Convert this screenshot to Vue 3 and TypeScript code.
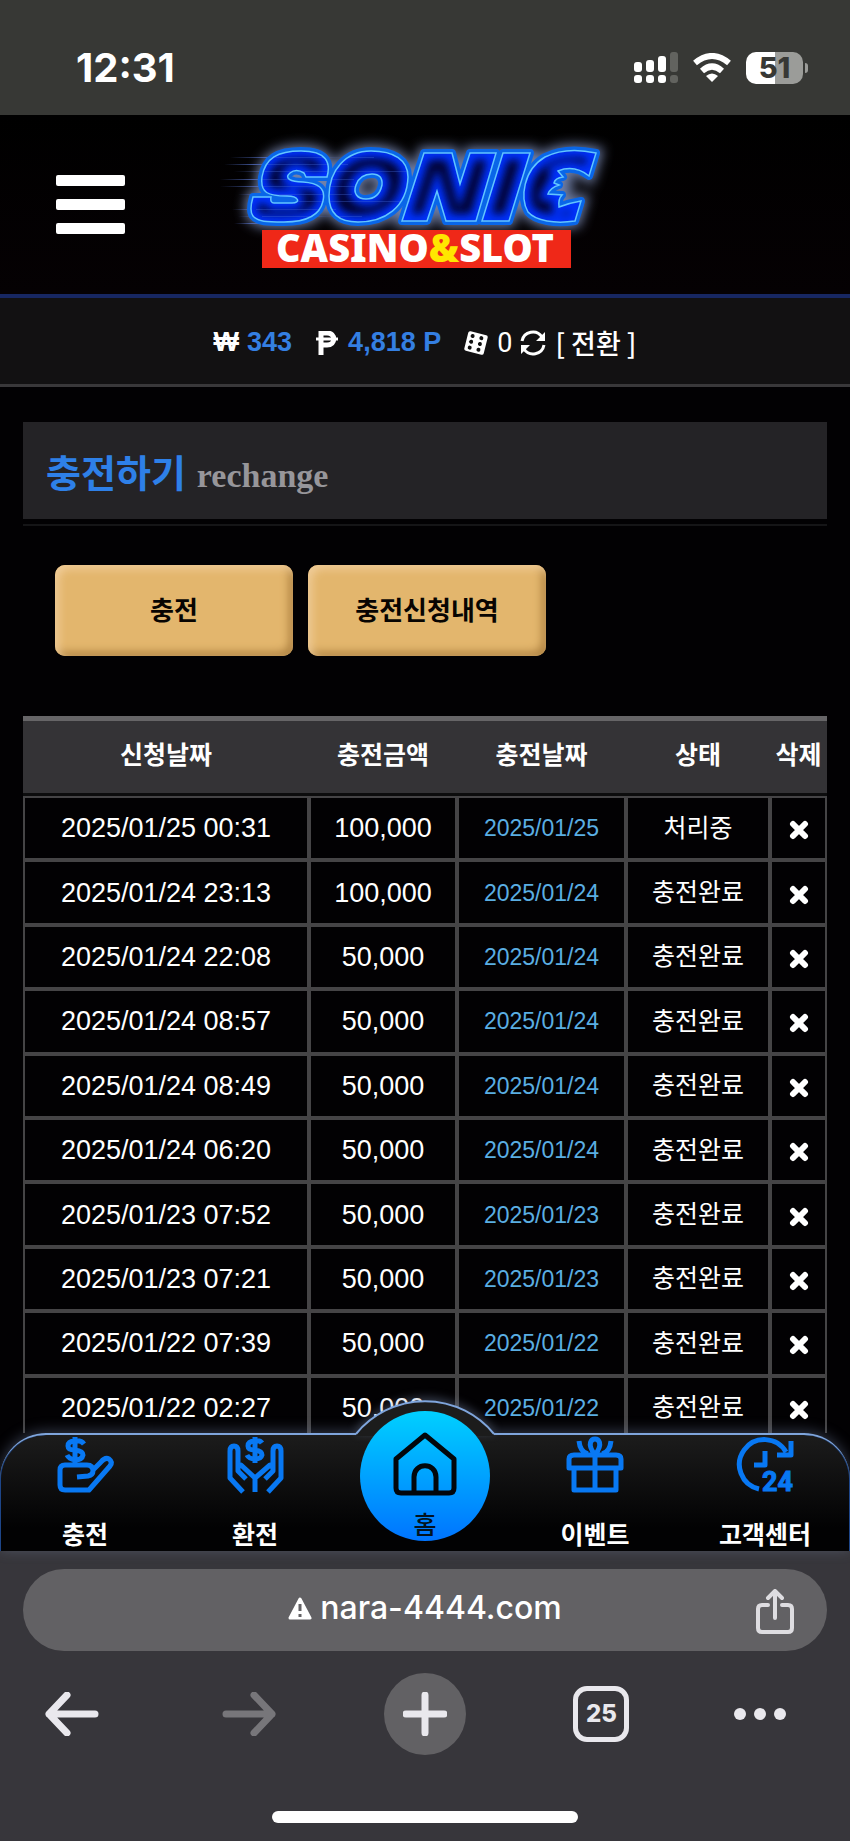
<script setup lang="ts">
interface Charge {
  requested: string
  amount: string
  charged: string
  status: string
}

const rows: Charge[] = [
  { requested: '2025/01/25 00:31', amount: '100,000', charged: '2025/01/25', status: '처리중' },
  { requested: '2025/01/24 23:13', amount: '100,000', charged: '2025/01/24', status: '충전완료' },
  { requested: '2025/01/24 22:08', amount: '50,000', charged: '2025/01/24', status: '충전완료' },
  { requested: '2025/01/24 08:57', amount: '50,000', charged: '2025/01/24', status: '충전완료' },
  { requested: '2025/01/24 08:49', amount: '50,000', charged: '2025/01/24', status: '충전완료' },
  { requested: '2025/01/24 06:20', amount: '50,000', charged: '2025/01/24', status: '충전완료' },
  { requested: '2025/01/23 07:52', amount: '50,000', charged: '2025/01/23', status: '충전완료' },
  { requested: '2025/01/23 07:21', amount: '50,000', charged: '2025/01/23', status: '충전완료' },
  { requested: '2025/01/22 07:39', amount: '50,000', charged: '2025/01/22', status: '충전완료' },
  { requested: '2025/01/22 02:27', amount: '50,000', charged: '2025/01/22', status: '충전완료' },
]

const headings: string[] = ['신청날짜', '충전금액', '충전날짜', '상태', '삭제']
const streaks: number[][] = [
  [34, 32, 120], [28, 39, 100], [38, 46, 150], [24, 54, 110],
  [24, 61, 130], [42, 69, 90], [60, 76, 130], [36, 84, 80], [42, 91, 100], [38, 98, 60],
]
</script>

<template>
  <div class="screen">
    <div class="status">
      <span class="clock">12:31</span>
      <div class="indicators">
        <svg width="44" height="32" viewBox="0 0 44 32" aria-label="신호">
          <g fill="#fff">
            <rect x="0" y="10" width="8" height="10" rx="3" />
            <rect x="12" y="8" width="8" height="12" rx="3" />
            <rect x="24" y="4" width="8" height="16" rx="3" />
            <rect x="0" y="23" width="8" height="8" rx="3" />
            <rect x="12" y="23" width="8" height="8" rx="3" />
            <rect x="24" y="23" width="8" height="8" rx="3" />
          </g>
          <g fill="#62635f">
            <rect x="36" y="0" width="8" height="20" rx="3" />
            <rect x="36" y="23" width="8" height="8" rx="3" />
          </g>
        </svg>
        <svg width="38" height="30" viewBox="0 0 38 30" aria-label="와이파이">
          <path d="M2 10Q19-4 36 10M9 18Q19 9 29 18" fill="none" stroke="#fff" stroke-width="6" />
          <path d="M13 23Q19 18 25 23L19 29Z" fill="#fff" />
        </svg>
        <div class="battery"><span>51</span></div>
      </div>
    </div>

    <header class="header">
      <button class="menu" aria-label="메뉴"><i></i><i></i><i></i></button>
      <svg class="logo" viewBox="0 0 430 160" role="img" aria-label="SONIC CASINO&amp;SLOT">
        <defs>
          <filter id="glow" x="-20%" y="-30%" width="140%" height="160%"><feGaussianBlur stdDeviation="6" /></filter>
          <filter id="inner" x="-20%" y="-20%" width="140%" height="140%"><feGaussianBlur stdDeviation="4" /></filter>
          <linearGradient id="fade"><stop offset="0" stop-color="#5a78d8" stop-opacity="0" /><stop offset=".3" stop-color="#5a78d8" stop-opacity=".7" /><stop offset="1" stop-color="#5a78d8" stop-opacity="0" /></linearGradient>
          <g id="word">
            <path d="M127 52C131 38 127 26 101 26C78 26 65 33 62 52C60 68 68 71 87 71C99 71 101 78 92 78H74Q70 78 71 72H53Q49 86 53 91C58 97 67 97 84 97C107 97 120 90 123 76C126 63 118 58 103 57C90 57 84 53 90 48Q96 43 104 48L106 52Z" />
            <path fill-rule="evenodd" d="M171 26C146 26 129 45 129 71C129 88 139 97 158 97C184 97 207 83 208 52C208 35 194 26 171 26ZM172 49Q183 49 182 60Q179 74 166 74C157 74 153 68 156 60Q160 49 172 49Z" />
            <path d="M224 28H252L260 59L270 28H296L276 96H246L237 66L227 96H202Z" />
            <path d="M303 28H330L309 96H282Z" />
            <path d="M396 28L389 51C379 43 368 42 358 46L363 52Q355 53 354 58L359 60Q350 63 348 69L362 70Q358 74 359 82Q369 78 381 76L375 96C355 99 336 96 328 87C320 73 323 45 345 32C359 25 378 24 396 28Z" />
          </g>
          <mask id="wordMask" maskUnits="userSpaceOnUse" x="0" y="0" width="430" height="160"><use href="#word" fill="#fff" /></mask>
        </defs>
        <use href="#word" fill="#7180a8" stroke="#7180a8" stroke-width="12" filter="url(#glow)" />
        <rect v-for="s in streaks" :key="s[1]" :x="s[0]! - 4" :y="s[1]" :width="s[2]" height="1" fill="url(#fade)" />
        <use href="#word" fill="#0048ce" stroke="#0966e8" stroke-width="8" stroke-linejoin="round" />
        <use href="#word" fill="#02022c" />
        <g mask="url(#wordMask)">
          <use href="#word" fill="none" stroke="#0432ff" stroke-width="14" filter="url(#inner)" />
          <rect v-for="s in streaks" :key="s[1]" :x="s[0]! + 20" :y="s[1]" :width="s[2]" height="1" fill="#416bd8" opacity=".35" />
        </g>
        <use href="#word" fill="none" stroke="#62c5ff" stroke-width="1.5" />
        <rect x="62" y="105" width="309" height="38" fill="#ef2818" />
        <text x="215" y="137" text-anchor="middle" class="tagline">CASINO<tspan fill="#ffe600">&amp;</tspan>SLOT</text>
      </svg>
    </header>

    <div class="balance">
      <span class="coin">₩</span>
      <b class="won">343</b>
      <svg class="peso" width="22" height="24" viewBox="0 0 22 24" aria-label="포인트"><path d="M5 24V2H11C20 2 20 14 11 14H5" fill="none" stroke="#fff" stroke-width="5" /><path d="M0 8H22" stroke="#fff" stroke-width="3" /></svg>
      <b class="points">4,818 P</b>
      <svg class="dice" width="24" height="24" viewBox="0 0 24 24" aria-label="카지노">
        <g transform="rotate(14 12 12)">
          <rect x="2" y="2" width="20" height="20" rx="2" fill="#fff" />
          <g fill="#111"><circle cx="7" cy="6" r="2" /><circle cx="7" cy="12" r="2" /><circle cx="7" cy="18" r="2" /><circle cx="16" cy="6" r="2" /><circle cx="16" cy="12" r="2" /><circle cx="16" cy="18" r="2" /></g>
        </g>
      </svg>
      <span class="zero">0</span>
      <button class="convert">
        <svg width="26" height="26" viewBox="0 0 26 26" aria-hidden="true"><path d="M2 11A11 11 0 0 1 22 7M24 15A11 11 0 0 1 4 19" fill="none" stroke="#fff" stroke-width="3" /><path d="M25 2V11H16ZM1 24V15H10Z" fill="#fff" /></svg>
        <span>[ 전환 ]</span>
      </button>
    </div>

    <main class="content">
      <h1 class="title"><span>충전하기</span><small>rechange</small></h1>
      <div class="rule"></div>
      <div class="tabs">
        <button>충전</button>
        <button>충전신청내역</button>
      </div>
      <table>
        <colgroup><col class="c1" /><col class="c2" /><col class="c3" /><col class="c4" /><col class="c5" /></colgroup>
        <thead><tr><th v-for="h in headings" :key="h" scope="col">{{ h }}</th></tr></thead>
        <tbody>
          <tr v-for="r in rows" :key="r.requested">
            <td>{{ r.requested }}</td>
            <td>{{ r.amount }}</td>
            <td class="date">{{ r.charged }}</td>
            <td class="state">{{ r.status }}</td>
            <td>
              <button class="remove" aria-label="삭제"><svg width="20" height="20" viewBox="0 0 20 20"><path d="M4 4L16 16M16 4L4 16" stroke="#fff" stroke-width="6" stroke-linecap="round" /></svg></button>
            </td>
          </tr>
        </tbody>
      </table>
    </main>

    <nav class="nav">
      <svg class="bump" width="138" height="35" viewBox="0 0 138 35" aria-hidden="true">
        <path d="M0 35V33A89 89 0 0 1 138 33V35Z" fill="#1c1c1c" />
        <path d="M0 33A89 89 0 0 1 138 33" fill="none" stroke="#7fa5dc" stroke-width="2" />
      </svg>
      <a href="#charge">
        <svg viewBox="0 0 56 56"><g class="line"><path d="M27 7Q24 3 18 4Q11 4 11 9Q11 13 18 13Q26 14 26 18Q25 23 18 23Q12 22 10 18M18 0V28" /><path d="M20 40L31 39Q36 38 36 34Q36 28 30 28H8Q3 28 3 33V48Q3 53 8 53H32L53 29Q56 25 52 22Q48 20 44 25L35 34" /></g></svg>
        <span>충전</span>
      </a>
      <a href="#exchange">
        <svg viewBox="0 0 56 56"><g class="line"><path d="M35 6Q33 3 28 4Q21 4 21 9Q21 13 28 13Q35 14 35 18Q34 22 28 22Q22 22 20 18M28 0V26" /><path d="M16 55L3 41V14Q3 9 7 9Q11 9 11 14V34L19 42M11 30L14 28L28 41V55M28 41L43 28L45 30M38 42L46 34V14Q46 9 50 9Q54 9 54 14V41L41 55" /></g></svg>
        <span>환전</span>
      </a>
      <a href="#home" class="home">
        <svg viewBox="0 0 64 64"><path d="M3 27L32 3L61 27V56Q61 61 56 61H8Q3 61 3 56ZM21 61V45C21 30 43 30 43 45V61" /></svg>
        <span>홈</span>
      </a>
      <a href="#event">
        <svg viewBox="0 0 56 56"><g class="line"><path d="M2 31V22Q2 18 7 18H49Q54 18 54 22V31ZM7 31V53H49V31M28 18V53M28 18C19 6 25 2 28 2C31 2 37 6 28 18M12 4Q13 15 21 17M44 4Q43 15 35 17" /></g></svg>
        <span>이벤트</span>
      </a>
      <a href="#support">
        <svg viewBox="0 0 56 56"><g class="line"><path d="M22 52A25 25 0 1 1 49 15M54 4V18H40M28 14V28H17" /></g><text x="25" y="54" class="hours">24</text></svg>
        <span>고객센터</span>
      </a>
    </nav>

    <footer class="browser">
      <div class="address">
        <a href="#site">
          <svg width="24" height="23" viewBox="0 0 24 23" aria-hidden="true"><path d="M12 2L22 21H2Z" fill="#fff" stroke="#fff" stroke-width="3" stroke-linejoin="round" /><path d="M12 7V14M12 17V20" stroke="#626164" stroke-width="3" /></svg>
          <span>nara-4444.com</span>
        </a>
        <button class="share" aria-label="공유"><svg width="40" height="46" viewBox="0 0 40 46"><path d="M13 16H7Q3 16 3 20V39Q3 43 7 43H33Q37 43 37 39V20Q37 16 33 16H27M20 29V3M13 9L20 2L27 9" fill="none" stroke="#dedde1" stroke-width="4" stroke-linecap="round" stroke-linejoin="round" /></svg></button>
      </div>
      <div class="tools">
        <button aria-label="뒤로"><svg width="54" height="44" viewBox="0 0 54 44"><path d="M50 22H4M22 3L4 22L22 41" /></svg></button>
        <button aria-label="앞으로" class="dim"><svg width="54" height="44" viewBox="0 0 54 44"><path d="M4 22H50M32 3L50 22L32 41" /></svg></button>
        <button aria-label="새 탭" class="plus"><svg width="44" height="44" viewBox="0 0 44 44"><path d="M22 3V41M3 22H41" /></svg></button>
        <button class="count"><span>25</span></button>
        <button aria-label="더보기" class="more"><svg width="54" height="14" viewBox="0 0 54 14"><g fill="#e9e8ed"><circle cx="7" cy="7" r="6" /><circle cx="27" cy="7" r="6" /><circle cx="47" cy="7" r="6" /></g></svg></button>
      </div>
      <div class="handle"></div>
    </footer>
  </div>
</template>

<style>
body { margin: 0; background: #37363b; }
</style>

<style scoped>
* { box-sizing: border-box; }
.screen {
  display: flex;
  flex-direction: column;
  height: 100vh;
  overflow: hidden;
  background: #020103;
  color: #fff;
  font-family: "Liberation Sans", "Noto Sans CJK KR", sans-serif;
}
button { border: 0; padding: 0; background: none; color: inherit; font: inherit; }
a { color: inherit; text-decoration: none; }
svg { display: block; }

.status {
  flex: none;
  height: 115px;
  padding: 20px 42px 0 76px;
  background: #373835;
  display: flex;
  align-items: center;
  justify-content: space-between;
}
.clock { font: 700 40px/44px Inter, sans-serif; }
.indicators { display: flex; align-items: center; gap: 15px; }
.battery {
  position: relative;
  width: 57px;
  height: 32px;
  margin-right: 5px;
  border-radius: 10px;
  background: linear-gradient(90deg, #fff 51%, #9b9c99 51%);
  color: #373835;
  font: 800 29px/32px Inter, sans-serif;
  text-align: center;
}
.battery::after {
  content: "";
  position: absolute;
  right: -5px;
  top: 11px;
  width: 3px;
  height: 10px;
  border-radius: 0 4px 4px 0;
  background: #9b9c99;
}

.header {
  flex: none;
  height: 183px;
  border-bottom: 4px solid #172762;
  padding: 10px 56px 0;
  display: grid;
  grid-template-columns: 69px 430px 69px;
  justify-content: space-between;
  align-items: start;
  background: linear-gradient(#000, #050103);
}
.menu { display: flex; flex-direction: column; gap: 13px; margin-top: 50px; }
.menu i { height: 11px; border-radius: 2px; background: #fff; }
.logo { width: 430px; height: 160px; margin-left: -10px; }
.tagline { fill: #fff; font: 900 38px "Noto Sans", sans-serif; }

.balance {
  flex: none;
  height: 89px;
  padding-top: 3px;
  border-bottom: 3px solid #39383a;
  background: #121112;
  display: flex;
  align-items: center;
  justify-content: center;
  font-size: 27px;
}
.coin { font-weight: 700; margin-right: 8px; }
.won, .points { color: #347fe2; }
.peso { margin: 0 10px 0 24px; }
.dice { margin: 0 9px 0 23px; }
.zero { font-family: Roboto, sans-serif; }
.convert { display: flex; align-items: center; gap: 9px; margin-left: 8px; font: 500 27px/30px "Noto Sans CJK KR", sans-serif; }

.content { flex: 1; min-height: 0; overflow: hidden; padding: 35px 23px 0; }
.title {
  margin: 0;
  height: 97px;
  padding: 0 23px;
  background: #242326;
  font: 700 38px/97px "Noto Sans CJK KR", sans-serif;
  color: #2e80e8;
}
.title small { margin-left: 11px; font: 700 34px "Liberation Serif", serif; color: #97969a; }
.rule { height: 2px; margin-top: 5px; background: #151517; }
.tabs { display: flex; gap: 15px; margin: 39px 32px 60px; }
.tabs button {
  width: 238px;
  height: 91px;
  padding-bottom: 5px;
  border-radius: 10px;
  background: #e3b66d;
  box-shadow: inset 4px 4px 8px #f0cc98, inset -4px -4px 8px #ae8241;
  color: #080502;
  font: 700 26px "Noto Sans CJK KR", sans-serif;
}

table { width: 100%; height: 724px; table-layout: fixed; border-collapse: separate; border-spacing: 0; }
.c1 { width: 286px; }
.c2 { width: 148px; }
.c3 { width: 169px; }
.c4 { width: 144px; }
.c5 { width: 57px; }
th {
  height: 80px;
  padding: 0 0 8px;
  border-top: 5px solid #666567;
  border-bottom: 3px solid #0c0c0d;
  background: #343336;
  font: 700 25px/36px "Noto Sans CJK KR", sans-serif;
  white-space: nowrap;
}
td { padding: 0; border: 2px solid #454446; font-size: 27px; line-height: 36px; text-align: center; white-space: nowrap; }
.date { color: #5aaee2; font-size: 23px; }
.state { padding-bottom: 5px; font: 400 25px/36px "Noto Sans CJK KR", sans-serif; }
.remove { display: block; margin: 4px auto 0; }

.nav {
  position: relative;
  flex: none;
  height: 118px;
  display: grid;
  grid-template-columns: repeat(5, 1fr);
  border: solid #7fa5dc;
  border-width: 2px 0 0;
  border-radius: 46px 46px 0 0;
  background: linear-gradient(#1c1c1c, #020203 80%);
  box-shadow: 0 -2px 14px #7d8fb066, inset 1px 0 #1d4588, inset -1px 0 #1d4588;
}
.bump { position: absolute; left: 50%; top: -34px; margin-left: -69px; overflow: visible; filter: drop-shadow(0 -3px 5px #7d8fb066); }
.nav a {
  position: relative;
  display: flex;
  flex-direction: column;
  align-items: center;
  justify-content: space-between;
  padding: 2px 0 2px;
  font: 700 25px/32px "Noto Sans CJK KR", sans-serif;
  white-space: nowrap;
}
.nav a svg { width: 56px; height: 56px; overflow: visible; }
.line { fill: none; stroke: #0878f3; stroke-width: 5; stroke-linejoin: round; }
.hours { fill: #0878f3; stroke: #0878f3; font: 700 27px Roboto, sans-serif; }
.nav .home {
  justify-self: center;
  width: 130px;
  height: 130px;
  margin-top: -24px;
  padding: 21px 0 2px;
  border-radius: 50%;
  background: linear-gradient(#00d0ff, #0074ff);
  color: #031320;
  font-weight: 500;
}
.nav .home svg { width: 64px; height: 64px; fill: none; stroke: #02070c; stroke-width: 5; stroke-linejoin: round; }

.browser { flex: none; height: 290px; padding: 18px 23px 0; background: #37363b; }
.address {
  position: relative;
  height: 82px;
  padding-bottom: 4px;
  border-radius: 41px;
  background: #626164;
  display: flex;
  align-items: center;
  justify-content: center;
}
.address a { display: flex; align-items: center; gap: 8px; font: 500 32px/40px Inter, sans-serif; }
.share { position: absolute; right: 32px; top: 20px; }
.tools { display: grid; grid-template-columns: repeat(5, 1fr); height: 82px; margin: 22px -39px 0; align-items: center; justify-items: center; }
.tools path { fill: none; stroke: #e9e8ed; stroke-width: 7; stroke-linecap: round; stroke-linejoin: round; }
.tools .dim path { stroke: #77767a; }
.plus { width: 82px; height: 82px; border-radius: 50%; background: #626164; display: grid; place-items: center; }
.count { width: 56px; height: 56px; border: 5px solid #e9e8ed; border-radius: 14px; color: #e9e8ed; font: 800 24px/46px Inter, sans-serif; }
.more { margin-right: 36px; }
.handle { width: 38%; height: 12px; margin: 56px auto 0; border-radius: 6px; background: #fff; }
</style>
